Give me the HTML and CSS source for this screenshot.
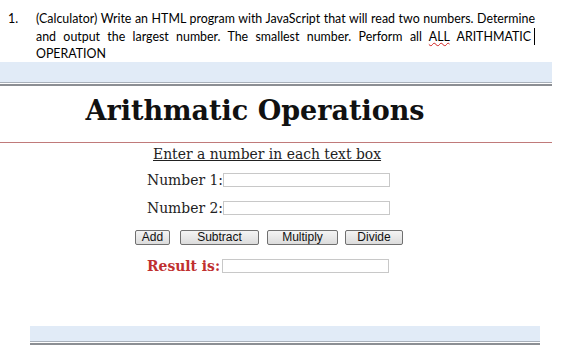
FILE: index.html
```html
<!DOCTYPE html>
<html lang="en">
<head>
    <meta charset="UTF-8">
    <title>Calculator</title>
    <link rel="stylesheet" href="styles.css">
</head>
<body>
<div class="question">
    <span class="num">1.</span>
    <p>
        <span class="line">(Calculator) Write an HTML program with JavaScript that will read two numbers. Determine</span>
        <span class="line">and output the largest number. The smallest number. Perform all <span class="squiggle">ALL</span> ARITHMATIC<span class="caret"></span></span>
        <span class="line last">OPERATION</span>
    </p>
</div>

<div class="browser-bar"></div>

<div class="page">
    <h1>Arithmatic Operations</h1>
    <hr class="red-rule">

    <form class="calc">
        <div class="intro">Enter a number in each text box</div>
        <div class="row">
            <label for="num1">Number 1:</label>
            <input type="text" id="num1">
        </div>
        <div class="row">
            <label for="num2">Number 2:</label>
            <input type="text" id="num2">
        </div>
        <div class="buttons">
            <button type="button" class="btn-add">Add</button>
            <button type="button" class="btn-sub">Subtract</button>
            <button type="button" class="btn-mul">Multiply</button>
            <button type="button" class="btn-div">Divide</button>
        </div>
        <div class="row result">
            <label for="result">Result is:</label>
            <input type="text" id="result">
        </div>
    </form>
</div>

<div class="browser-bar bottom"></div>
</body>
</html>
```

FILE: styles.css
```css
body {
    margin: 0;
    background-color: #ffffff;
    font-family: "DejaVu Serif", serif;
    width: 562px;
    height: 348px;
    overflow: hidden;
}

.question {
    display: flex;
    padding: 10px 0 0 8px;
    height: 52px;
    font-family: Lato, sans-serif;
    font-size: 12.4px;
    color: #000;
}

.question .num {
    width: 28px;
    line-height: 17.5px;
}

.question p {
    margin: 0;
    width: 499px;
    line-height: 17.5px;
}

.question .line {
    display: block;
    white-space: nowrap;
    text-align: justify;
    text-align-last: justify;
}

.question .line.last {
    text-align-last: left;
}

.squiggle {
    text-decoration: underline wavy #d02020;
    text-decoration-thickness: 1px;
}

.caret {
    display: inline-block;
    width: 1px;
    height: 17px;
    background-color: #000;
    vertical-align: -4px;
    margin-left: 3px;
}

.browser-bar {
    width: 552px;
    height: 20px;
    background-color: #e1ebf7;
    border-bottom: 1px solid #a8b0ba;
    position: relative;
}

.browser-bar::after {
    content: "";
    display: block;
    position: absolute;
    left: 0;
    right: 0;
    top: 22px;
    height: 2px;
    background-color: #8c8f94;
}

.page {
    height: 238px;
    padding-top: 5px;
}

h1 {
    margin: 0;
    width: 510px;
    text-align: center;
    font-size: 27px;
    line-height: 46px;
    color: #111;
}

.red-rule {
    margin: 8px 0 0;
    width: 552px;
    border: none;
    border-top: 1px solid #c07a7a;
}

.calc {
    width: 270px;
    margin: 2px 0 0 135px;
    font-size: 13.9px;
    color: #222;
}

.intro {
    text-decoration: underline;
    margin-left: 18px;
    line-height: 18px;
    white-space: nowrap;
}

.row {
    display: flex;
    align-items: center;
    height: 18px;
    margin-top: 8px;
    padding-left: 12px;
}

.row + .row {
    margin-top: 10px;
}

.row label {
    width: 76px;
    white-space: nowrap;
}

.row input {
    width: 165px;
    height: 12px;
    border: 1px solid #c8c8c8;
    padding: 0;
}

.buttons {
    display: flex;
    margin-top: 13px;
}

.buttons button {
    font-family: "Liberation Sans", sans-serif;
    font-size: 12px;
    height: 15px;
    padding: 0;
    border: 1px solid #707070;
    border-radius: 2px;
    background: linear-gradient(#f4f4f4, #dcdcdc);
    color: #111;
    line-height: 13px;
}

.btn-add { width: 35px; }
.btn-sub { width: 79px; margin-left: 10px; }
.btn-mul { width: 71px; margin-left: 8px; }
.btn-div { width: 58px; margin-left: 7px; }

.row.result {
    margin-top: 12px;
}

.result label {
    color: #c03030;
    font-weight: bold;
    width: 75px;
}

.browser-bar.bottom {
    width: 510px;
    height: 15px;
    margin-left: 30px;
}

.browser-bar.bottom::after {
    top: 17px;
}
```
